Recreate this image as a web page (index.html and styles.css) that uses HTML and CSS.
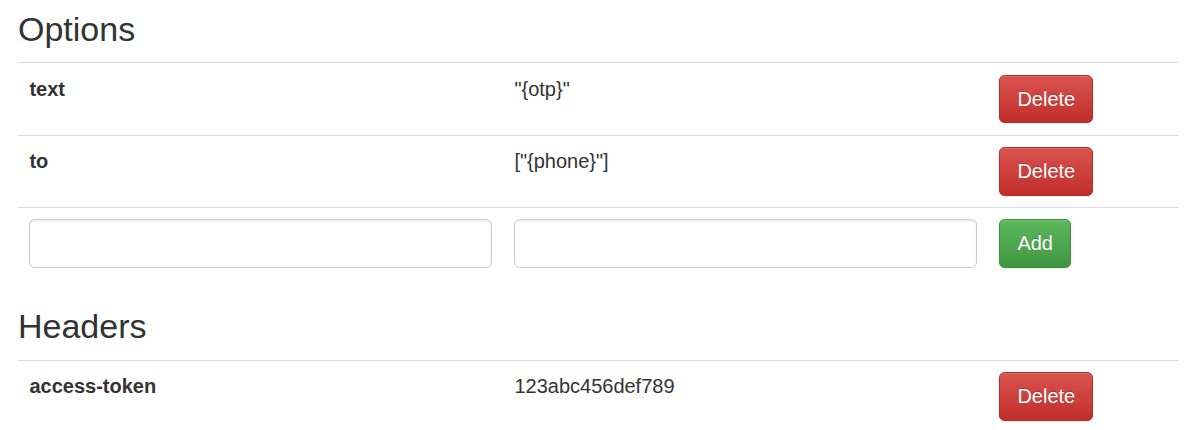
FILE: index.html
```html
<!DOCTYPE html>
<html>
<head>
<meta charset="utf-8">
<link rel="stylesheet" href="styles.css">
</head>
<body>
<div class="page">
  <h3 class="section-title">Options</h3>
  <table class="kv-table">
    <colgroup>
      <col class="col-key"><col class="col-val"><col class="col-act">
    </colgroup>
    <tbody>
      <tr>
        <td class="key">text</td>
        <td>"{otp}"</td>
        <td><button class="btn btn-danger">Delete</button></td>
      </tr>
      <tr>
        <td class="key">to</td>
        <td>["{phone}"]</td>
        <td><button class="btn btn-danger">Delete</button></td>
      </tr>
      <tr>
        <td><input class="form-control" type="text"></td>
        <td><input class="form-control" type="text"></td>
        <td><button class="btn btn-success">Add</button></td>
      </tr>
    </tbody>
  </table>
  <h3 class="section-title">Headers</h3>
  <table class="kv-table">
    <colgroup>
      <col class="col-key"><col class="col-val"><col class="col-act">
    </colgroup>
    <tbody>
      <tr>
        <td class="key">access-token</td>
        <td>123abc456def789</td>
        <td><button class="btn btn-danger">Delete</button></td>
      </tr>
    </tbody>
  </table>
</div>
</body>
</html>
```
FILE: styles.css
```css
html, body {
  margin: 0;
  padding: 0;
  background: #fff;
}
body {
  font-family: "Liberation Sans", Arial, Helvetica, sans-serif;
  font-size: 20px;
  line-height: 28.6px;
  color: #333;
}
.page {
  width: 1161px;
  padding: 11px 21px 0 18px;
}
.section-title {
  font-size: 34px;
  font-weight: 500;
  line-height: 37px;
  margin: 28.6px 0 14.3px;
  color: #333;
}
.section-title:first-child {
  margin-top: 0;
}
.kv-table {
  width: 100%;
  border-collapse: collapse;
  table-layout: fixed;
  margin-bottom: 29px;
}
.col-key { width: 485px; }
.col-val { width: 485px; }
.col-act { width: 191px; }
.kv-table td {
  padding: 11.4px;
  border-top: 1px solid #ddd;
  vertical-align: top;
  line-height: 28.6px;
}
.key {
  font-weight: bold;
}
.btn {
  display: inline-block;
  font-family: inherit;
  font-size: 20px;
  line-height: 28.6px;
  padding: 9px 17px;
  border: 1px solid transparent;
  border-radius: 5.7px;
  color: #fff;
  cursor: pointer;
  text-shadow: 0 -1px 0 rgba(0, 0, 0, 0.2);
  box-shadow: inset 0 1px 0 rgba(255, 255, 255, 0.15), 0 1px 1px rgba(0, 0, 0, 0.075);
}
.btn-danger {
  background-color: #d9534f;
  background-image: linear-gradient(to bottom, #d9534f 0, #c12e2a 100%);
  border-color: #b92c28;
}
.btn-success {
  background-color: #5cb85c;
  background-image: linear-gradient(to bottom, #5cb85c 0, #419641 100%);
  border-color: #3e8f3e;
}
.form-control {
  display: block;
  box-sizing: border-box;
  width: 100%;
  height: 48.6px;
  margin: 0;
  padding: 8.6px 17px;
  font-family: inherit;
  font-size: 20px;
  color: #555;
  background: #fff;
  border: 1px solid #ccc;
  border-radius: 5.7px;
  box-shadow: inset 0 1.4px 1.4px rgba(0, 0, 0, 0.075);
}
```
